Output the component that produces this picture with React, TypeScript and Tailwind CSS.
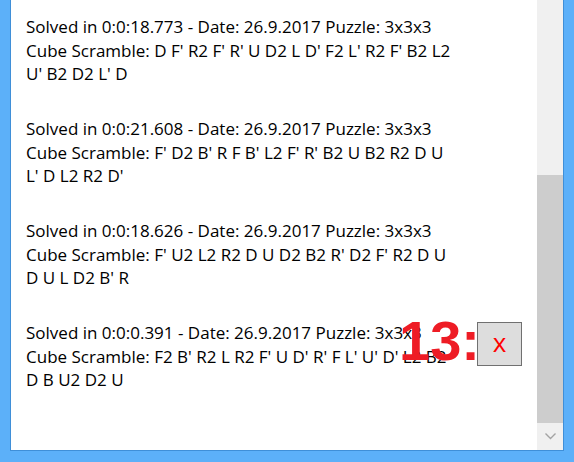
import React from "react";

const entries = [
  {
    time: "0:0:18.773",
    l2: "Cube Scramble: D F' R2 F' R' U D2 L D' F2 L' R2 F' B2 L2",
    l3: "U' B2 D2 L' D",
  },
  {
    time: "0:0:21.608",
    l2: "Cube Scramble: F' D2 B' R F B' L2 F' R' B2 U B2 R2 D U",
    l3: "L' D L2 R2 D'",
  },
  {
    time: "0:0:18.626",
    l2: "Cube Scramble: F' U2 L2 R2 D U D2 B2 R' D2 F' R2 D U",
    l3: "D U L D2 B' R",
  },
  {
    time: "0:0:0.391",
    l2: "Cube Scramble: F2 B' R2 L R2 F' U D' R' F L' U' D' L2 B2",
    l3: "D B U2 D2 U",
  },
];

export default function App() {
  return (
    <div className="relative w-[574px] h-[462px] bg-[#5cb0f9] overflow-hidden pl-[10px] pr-[10px] pb-[11px]">
      <div className="flex h-full border-l border-r border-b border-[#3f8fd8] bg-white">
        <div
          className="flex-1 pl-[15px] pt-[15px] text-[17px] leading-[23.5px] text-[#000]"
          style={{ fontFamily: '"Open Sans", "Noto Sans", sans-serif' }}
        >
          {entries.map((e, i) => (
            <div key={i} className="mb-[31.5px] whitespace-nowrap">
              <div>Solved in {e.time} - Date: 26.9.2017 Puzzle: 3x3x3</div>
              <div>{e.l2}</div>
              <div>{e.l3}</div>
            </div>
          ))}
        </div>
        <div className="w-[26px] flex flex-col bg-[#f0f0f0]">
          <div className="h-[175px]" />
          <div className="flex-1 bg-[#cdcdcd]" />
          <div className="h-[27px] flex items-center justify-center">
            <svg width="11" height="7" viewBox="0 0 11 7">
              <path d="M0.5 0.5 L5.5 5.5 L10.5 0.5" fill="none" stroke="#a3a3a3" strokeWidth="1.4" />
            </svg>
          </div>
        </div>
      </div>
      <div
        className="absolute left-[399px] top-[306px] text-[56px] font-bold text-[#ee1c25] leading-[70px]"
        style={{ fontFamily: '"Liberation Sans", Arial, sans-serif' }}
      >
        13:
      </div>
      <div
        className="absolute left-[477px] top-[322px] w-[45px] h-[44px] bg-[#dddddd] border border-[#707070] flex items-center justify-center text-[26px] text-[#ff0000]"
        style={{ fontFamily: '"Open Sans", sans-serif' }}
      >
        <span className="leading-none -mt-[4px]">x</span>
      </div>
    </div>
  );
}
